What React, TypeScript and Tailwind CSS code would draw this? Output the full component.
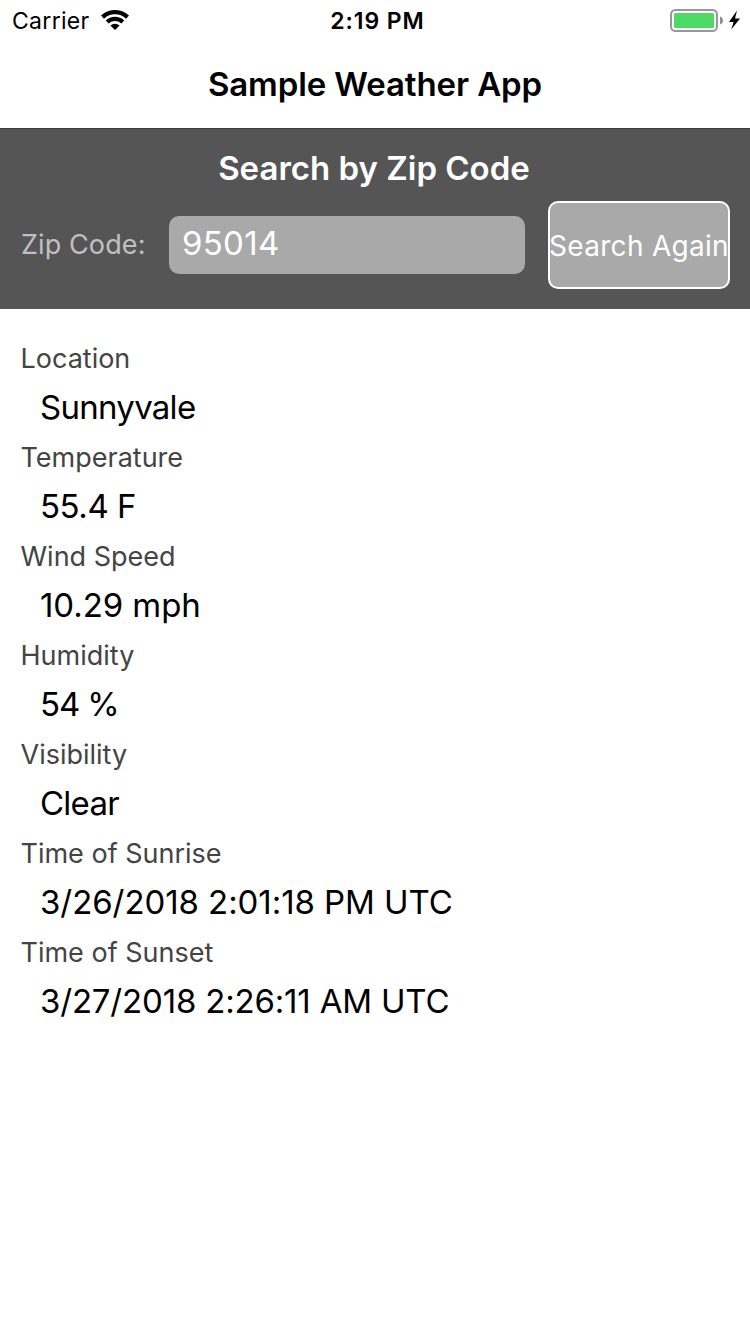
import React, { useState } from "react";

type Reading = { label: string; value: string; tracking: string };

const readings: Reading[] = [
  { label: "Location", value: "Sunnyvale", tracking: "tracking-[-0.72px]" },
  { label: "Temperature", value: "55.4 F", tracking: "tracking-[-0.45px]" },
  { label: "Wind Speed", value: "10.29 mph", tracking: "tracking-[-0.07px]" },
  { label: "Humidity", value: "54 %", tracking: "tracking-[-1.1px]" },
  { label: "Visibility", value: "Clear", tracking: "tracking-[-0.75px]" },
  { label: "Time of Sunrise", value: "3/26/2018 2:01:18 PM UTC", tracking: "tracking-[-0.07px]" },
  { label: "Time of Sunset", value: "3/27/2018 2:26:11 AM UTC", tracking: "tracking-[-0.18px]" },
];

function WifiIcon() {
  return (
    <svg className="mb-[2px]" width="28" height="20" viewBox="0 0 28 20" fill="none" stroke="black" strokeWidth="4.3">
      <path d="M1.500 7.100a18.200 18.200 0 0 1 25 0M6.200 12a11.500 11.500 0 0 1 15.600 0" />
      <path d="M14 20l-4.600-4.400a6.600 6.600 0 0 1 9.200 0Z" fill="black" stroke="none" />
    </svg>
  );
}

function BatteryIcon() {
  return (
    <svg width="72" height="24" viewBox="0 0 72 24">
      <rect x="1" y="1" width="46" height="21" rx="4.5" fill="none" stroke="#989898" strokeWidth="2" />
      <rect x="4" y="4" width="40" height="15" rx="1.5" fill="#4cd964" />
      <path d="M50 7.500c1.800.600 3 2.200 3 4s-1.200 3.400-3 4Z" fill="#8e8e8e" />
      <path d="M67 1.500L59 13h4.600L61.300 20.500 70 9.500h-5Z" fill="black" />
    </svg>
  );
}

function StatusBar() {
  return (
    <div className="grid h-[41px] grid-cols-3 items-center pr-2 pl-3 text-[23px] leading-[39px]">
      <div className="flex items-center gap-[11px]">
        <span className="pt-[2px] tracking-[0.3px]">Carrier</span>
        <WifiIcon />
      </div>
      <span className="pt-[2px] pl-px text-center font-semibold tracking-[0.9px]">2:19 PM</span>
      <div className="flex justify-end">
        <BatteryIcon />
      </div>
    </div>
  );
}

export default function App() {
  const [zip, setZip] = useState("95014");

  return (
    <main className="flex h-[1334px] w-[750px] flex-col bg-white font-['Inter',sans-serif] text-black">
      <header className="flex h-[128px] flex-col">
        <StatusBar />
        <h1 className="text-center text-[33px] leading-[86px] font-semibold tracking-[-0.1px]">
          Sample Weather App
        </h1>
      </header>
      <section className="flex h-[181px] flex-col border-t border-[#3e3e3e] bg-[#555555] text-white">
        <h2 className="pt-[15px] pr-[2px] text-center text-[33px] leading-[48px] font-semibold">
          Search by Zip Code
        </h2>
        <form className="mt-[9px] flex items-center pr-5 pl-[21px]" onSubmit={(e) => e.preventDefault()}>
          <label htmlFor="zip" className="w-[148px] shrink-0 text-[27px] leading-[58px] tracking-[0.1px] text-[#c0c0c0]">
            Zip Code:
          </label>
          <input
            id="zip"
            value={zip}
            onChange={(e) => setZip(e.target.value)}
            className="h-[58px] w-[356px] rounded-[10px] bg-[#a9a9a9] px-[13px] pb-1 text-[33px] tracking-[0.3px] text-white outline-none"
          />
          <button
            type="submit"
            className="ml-[23px] flex h-[88px] w-[182px] items-center justify-center rounded-[10px] border-2 border-white bg-[#a9a9a9] pt-[2px] text-[28px] tracking-[0.3px] whitespace-nowrap text-white"
          >
            Search Again
          </button>
        </form>
      </section>
      <dl className="flex flex-col px-5 pt-[25px]">
        {readings.map((r) => (
          <div key={r.label} className="h-[99px]">
            <dt className="h-[49px] pl-[0.5px] text-[27px] leading-[49px] text-[#444]">{r.label}</dt>
            <dd className={`h-[50px] pl-5 text-[33px] leading-[48px] ${r.tracking}`}>{r.value}</dd>
          </div>
        ))}
      </dl>
    </main>
  );
}
